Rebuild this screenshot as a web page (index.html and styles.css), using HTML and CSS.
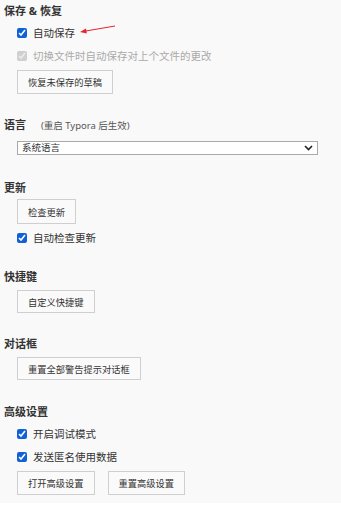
FILE: index.html
```html
<!DOCTYPE html>
<html lang="zh-CN">
<head>
  <meta charset="UTF-8">
  <meta name="viewport" content="width=device-width, initial-scale=1.0">
  <title>偏好设置 - 通用</title>
  <link rel="stylesheet" href="styles.css">
</head>
<body>
  <div class="prefs">

    <!-- 保存 & 恢复 -->
    <section class="group first">
      <h2 class="group-title">保存 &amp; 恢复</h2>
      <label class="check">
        <input type="checkbox" checked>
        <span>自动保存</span>
        <svg class="arrow" width="38" height="10" viewBox="0 0 38 10">
          <line x1="36" y1="1" x2="5" y2="6.3" stroke="#e8232a" stroke-width="1"/>
          <polygon points="1,7 7,3.6 7.8,8.4" fill="#e8232a"/>
        </svg>
      </label>
      <label class="check">
        <input type="checkbox" checked disabled>
        <span class="muted">切换文件时自动保存对上个文件的更改</span>
      </label>
      <div class="row">
        <button class="btn">恢复未保存的草稿</button>
      </div>
    </section>

    <!-- 语言 -->
    <section class="group lang">
      <h2 class="group-title">语言 <small class="hint">(重启 Typora 后生效)</small></h2>
      <div class="select-wrap">
        <select class="select">
          <option>系统语言</option>
        </select>
        <svg class="chevron" width="9" height="6" viewBox="0 0 9 6">
          <polyline points="1,1 4.5,4.5 8,1" fill="none" stroke="#222" stroke-width="1.6"/>
        </svg>
      </div>
    </section>

    <!-- 更新 -->
    <section class="group update">
      <h2 class="group-title">更新</h2>
      <div class="row">
        <button class="btn tall">检查更新</button>
      </div>
      <label class="check">
        <input type="checkbox" checked>
        <span>自动检查更新</span>
      </label>
    </section>

    <!-- 快捷键 -->
    <section class="group keys">
      <h2 class="group-title">快捷键</h2>
      <div class="row">
        <button class="btn short">自定义快捷键</button>
      </div>
    </section>

    <!-- 对话框 -->
    <section class="group dialogs">
      <h2 class="group-title">对话框</h2>
      <div class="row">
        <button class="btn short">重置全部警告提示对话框</button>
      </div>
    </section>

    <!-- 高级设置 -->
    <section class="group advanced">
      <h2 class="group-title">高级设置</h2>
      <label class="check">
        <input type="checkbox" checked>
        <span>开启调试模式</span>
      </label>
      <label class="check">
        <input type="checkbox" checked>
        <span>发送匿名使用数据</span>
      </label>
      <div class="row">
        <button class="btn">打开高级设置</button>
        <button class="btn">重置高级设置</button>
      </div>
    </section>

  </div>
</body>
</html>
```

FILE: styles.css
```css
body {
  margin: 0;
  background: #fff;
  font-family: "Noto Sans", "Noto Sans CJK SC", sans-serif;
  color: #333;
}

.prefs {
  background: #f9f9f9;
  padding: 3px 0 8px 4px;
}

.group {
  display: flex;
  flex-direction: column;
  gap: 4px;
  margin-top: 23px;
}

.group.first { margin-top: 0; }
.group.update { margin-top: 25px; }
.group.keys { margin-top: 22px; }
.group.dialogs { margin-top: 23px; }
.group.advanced { margin-top: 24px; }

.group-title {
  margin: 0;
  font-size: 11px;
  line-height: 16px;
  font-weight: bold;
  color: #333;
}

.hint {
  font-size: 9.5px;
  font-weight: normal;
  color: #555;
  margin-left: 12px;
}

.check {
  position: relative;
  display: flex;
  align-items: center;
  gap: 6px;
  height: 19px;
  padding-left: 13px;
  font-size: 10.5px;
  color: #333;
}

.check input {
  margin: 0;
  width: 10px;
  height: 10px;
  accent-color: #1061d6;
}

.muted {
  color: #aaa;
}

.arrow {
  position: absolute;
  left: 75px;
  top: 2px;
}

.row {
  display: flex;
  gap: 13px;
  padding-left: 13px;
  margin-top: 1px;
}

.update .row {
  margin-top: -1px;
}

.btn {
  height: 24px;
  padding: 0 10px;
  font-family: inherit;
  font-size: 9.25px;
  color: #333;
  background: #fafafa;
  border: 1px solid #cfcfcf;
  border-radius: 0;
}

.btn.tall { height: 25px; }
.btn.short { height: 23px; }

.select-wrap {
  position: relative;
  width: 301px;
  margin: 3px 0 0 13px;
}

.select {
  appearance: none;
  display: block;
  width: 100%;
  height: 14px;
  padding: 0 0 0 4px;
  font-family: inherit;
  font-size: 9.5px;
  line-height: 12px;
  color: #333;
  background: #fff;
  border: 1px solid #a9a9a9;
  border-radius: 0;
}

.chevron {
  position: absolute;
  right: 5px;
  top: 4px;
  pointer-events: none;
}
```
